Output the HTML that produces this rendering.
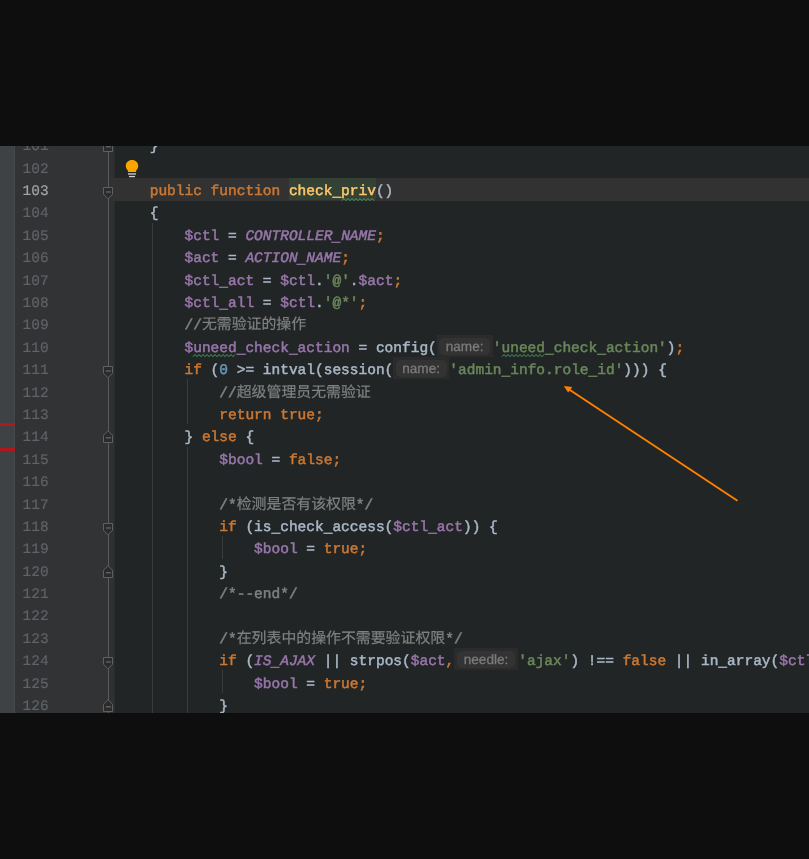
<!DOCTYPE html>
<html><head><meta charset="utf-8"><title>editor</title>
<style>
html,body{margin:0;padding:0;}
body{width:809px;height:859px;background:#0e0e0e;overflow:hidden;position:relative;font-family:"Liberation Mono",monospace;}
#ed{position:absolute;left:0;top:146px;width:809px;height:567px;background:#212526;overflow:hidden;}
#in{will-change:transform;position:absolute;left:0;top:-146px;width:809px;height:859px;}
.abs{position:absolute;}
.ln{text-rendering:geometricPrecision;-webkit-text-stroke:0.5px;position:absolute;left:0;width:1009px;height:22.39px;line-height:22.39px;font-size:14.5px;white-space:pre;color:#a9b7c6;font-family:"Liberation Mono",monospace;letter-spacing:-0.0015px;}
.ln>.code{position:absolute;left:149.7px;top:3.15px;height:22.39px;}
.num{-webkit-text-stroke:0.2px;position:absolute;left:22.6px;top:3.15px;color:#606366;}
.k{color:#cc7832;} .v{color:#9876aa;} .t{color:#a9b7c6;} .s{color:#6a8759;} .n{color:#6897bb;}
.c{color:#808080;} .ci{color:#9876aa;font-style:italic;} .f{color:#ffc66d;}
.ln i{font-style:inherit;position:relative;top:1.2px;}
.cj{font-family:"Liberation Mono","Noto Sans CJK SC",monospace;font-size:14.9px;color:#808080;-webkit-text-stroke:0.2px;letter-spacing:0;}
.hint{display:inline-block;position:relative;height:22.39px;vertical-align:top;background:#2b2b2b;letter-spacing:0;top:-3.15px;}
.hin{position:absolute;left:2.4px;right:2.8px;top:3px;height:17px;border-radius:5px;background:#333333;color:#7b7b7b;font-family:"Liberation Sans",sans-serif;font-size:13.6px;line-height:17px;text-align:center;font-style:normal;-webkit-text-stroke:0.3px;}
.fnbg{background:#334234;display:inline-block;height:22.39px;position:relative;top:-3.15px;vertical-align:top;}
.fnbg>span{position:relative;top:3.15px;}
.wv{}
</style></head><body>
<div id="ed"><div id="in">

<div class="abs" style="left:0;top:146px;width:15px;height:567px;background:#3e4244"></div>
<div class="abs" style="left:15px;top:146px;width:99px;height:567px;background:#313335"></div>
<div class="abs" style="left:14px;top:146px;width:1px;height:567px;background:#44484a"></div>
<div class="abs" style="left:109px;top:146px;width:5px;height:567px;background:#2f3031"></div>
<div class="abs" style="left:114px;top:146px;width:1px;height:567px;background:#2a2c2d"></div>
<div class="abs" style="left:109px;top:177.90px;width:809px;height:22.990000000000002px;background:#323232"></div>
<div class="abs" style="left:0;top:423px;width:15px;height:3px;background:#b0181e"></div>
<div class="abs" style="left:0;top:448px;width:15px;height:3px;background:#b0181e"></div>
<div class="abs" style="left:107.8px;top:146px;width:1px;height:567px;background:#5a5a5a"></div>
<div class="abs" style="left:152px;top:222.68px;width:1px;height:514.97px;background:#393c3d"></div>
<div class="abs" style="left:187px;top:379.41px;width:1px;height:44.78px;background:#393c3d"></div>
<div class="abs" style="left:187px;top:446.58px;width:1px;height:291.07px;background:#393c3d"></div>
<div class="abs" style="left:222px;top:536.14px;width:1px;height:22.39px;background:#393c3d"></div>
<div class="abs" style="left:222px;top:670.48px;width:1px;height:22.39px;background:#393c3d"></div>
<svg class="abs" style="left:102px;top:139.32px" width="12" height="13" viewBox="0 0 12 13"><path d="M1.5 12.5 H10.5 V5.3 L6 0.7 L1.5 5.3 Z" fill="#2b2b2b" stroke="#606060" stroke-width="1"/><path d="M3.9 7.8 H8.9" stroke="#707070" stroke-width="1.1"/></svg>
<svg class="abs" style="left:102px;top:187.10px" width="12" height="13" viewBox="0 0 12 13"><path d="M1.5 0.5 H10.5 V7.2 L6 11.8 L1.5 7.2 Z" fill="#2b2b2b" stroke="#606060" stroke-width="1"/><path d="M3.9 5 H8.9" stroke="#707070" stroke-width="1.1"/></svg>
<svg class="abs" style="left:102px;top:366.22px" width="12" height="13" viewBox="0 0 12 13"><path d="M1.5 0.5 H10.5 V7.2 L6 11.8 L1.5 7.2 Z" fill="#2b2b2b" stroke="#606060" stroke-width="1"/><path d="M3.9 5 H8.9" stroke="#707070" stroke-width="1.1"/></svg>
<svg class="abs" style="left:102px;top:522.95px" width="12" height="13" viewBox="0 0 12 13"><path d="M1.5 0.5 H10.5 V7.2 L6 11.8 L1.5 7.2 Z" fill="#2b2b2b" stroke="#606060" stroke-width="1"/><path d="M3.9 5 H8.9" stroke="#707070" stroke-width="1.1"/></svg>
<svg class="abs" style="left:102px;top:657.29px" width="12" height="13" viewBox="0 0 12 13"><path d="M1.5 0.5 H10.5 V7.2 L6 11.8 L1.5 7.2 Z" fill="#2b2b2b" stroke="#606060" stroke-width="1"/><path d="M3.9 5 H8.9" stroke="#707070" stroke-width="1.1"/></svg>
<svg class="abs" style="left:102px;top:430.39px" width="12" height="13" viewBox="0 0 12 13"><path d="M1.5 12.5 H10.5 V5.3 L6 0.7 L1.5 5.3 Z" fill="#2b2b2b" stroke="#606060" stroke-width="1"/><path d="M3.9 7.8 H8.9" stroke="#707070" stroke-width="1.1"/></svg>
<svg class="abs" style="left:102px;top:564.73px" width="12" height="13" viewBox="0 0 12 13"><path d="M1.5 12.5 H10.5 V5.3 L6 0.7 L1.5 5.3 Z" fill="#2b2b2b" stroke="#606060" stroke-width="1"/><path d="M3.9 7.8 H8.9" stroke="#707070" stroke-width="1.1"/></svg>
<svg class="abs" style="left:102px;top:699.07px" width="12" height="13" viewBox="0 0 12 13"><path d="M1.5 12.5 H10.5 V5.3 L6 0.7 L1.5 5.3 Z" fill="#2b2b2b" stroke="#606060" stroke-width="1"/><path d="M3.9 7.8 H8.9" stroke="#707070" stroke-width="1.1"/></svg>
<svg class="abs" style="left:124px;top:158px" width="16" height="20" viewBox="0 0 16 20"><path d="M8 2.1 C4.5 2.1 1.8 4.6 1.8 7.9 C1.8 9.9 2.9 11.4 3.9 12.6 V13.9 H12.1 V12.6 C13.1 11.4 14.2 9.9 14.2 7.9 C14.2 4.6 11.5 2.1 8 2.1 Z" fill="#fba400"/><rect x="4" y="15" width="8" height="1.9" fill="#9a9ea0"/><rect x="5" y="17.9" width="6" height="1.3" fill="#cfd2d3"/></svg>
<div class="ln" style="top:133.12px"><span class="num">101</span><span class="code"><span class="t">}</span></span></div>
<div class="ln" style="top:155.51px"><span class="num">102</span><span class="code"></span></div>
<div class="ln" style="top:177.90px"><span class="num" style="color:#a4a3a3">103</span><span class="code"><span class="k">public function </span><span class="fnbg"><span class="f">check<i>_</i></span><span class="wv f">priv</span></span><span class="t">()</span></span></div>
<div class="ln" style="top:200.29px"><span class="num">104</span><span class="code"><span class="t">{</span></span></div>
<div class="ln" style="top:222.68px"><span class="num">105</span><span class="code">    <span class="v">$ctl</span><span class="t"> = </span><span class="ci">CONTROLLER<i>_</i>NAME</span><span class="k">;</span></span></div>
<div class="ln" style="top:245.07px"><span class="num">106</span><span class="code">    <span class="v">$act</span><span class="t"> = </span><span class="ci">ACTION<i>_</i>NAME</span><span class="k">;</span></span></div>
<div class="ln" style="top:267.46px"><span class="num">107</span><span class="code">    <span class="v">$ctl<i>_</i>act</span><span class="t"> = </span><span class="v">$ctl</span><span class="t">.</span><span class="s">'@'</span><span class="t">.</span><span class="v">$act</span><span class="k">;</span></span></div>
<div class="ln" style="top:289.85px"><span class="num">108</span><span class="code">    <span class="v">$ctl<i>_</i>all</span><span class="t"> = </span><span class="v">$ctl</span><span class="t">.</span><span class="s">'@*'</span><span class="k">;</span></span></div>
<div class="ln" style="top:312.24px"><span class="num">109</span><span class="code">    <span class="c">//<span class="cj">无需验证的操作</span></span></span></div>
<div class="ln" style="top:334.63px"><span class="num">110</span><span class="code">    <span class="v">$</span><span class="wv v">uneed</span><span class="v"><i>_</i>check<i>_</i>action</span><span class="t"> = config(</span><span class="hint" style="width:56px"><span class="hin">name:</span></span><span class="s">'</span><span class="wv s">uneed</span><span class="s"><i>_</i>check<i>_</i>action'</span><span class="t">)</span><span class="k">;</span></span></div>
<div class="ln" style="top:357.02px"><span class="num">111</span><span class="code">    <span class="k">if </span><span class="t">(</span><span class="n">0</span><span class="t"> &gt;= intval(session(</span><span class="hint" style="width:56px"><span class="hin">name:</span></span><span class="s">'admin<i>_</i>info.role<i>_</i>id'</span><span class="t">))) {</span></span></div>
<div class="ln" style="top:379.41px"><span class="num">112</span><span class="code">        <span class="c">//<span class="cj">超级管理员无需验证</span></span></span></div>
<div class="ln" style="top:401.80px"><span class="num">113</span><span class="code">        <span class="k">return true;</span></span></div>
<div class="ln" style="top:424.19px"><span class="num">114</span><span class="code">    <span class="t">} </span><span class="k">else </span><span class="t">{</span></span></div>
<div class="ln" style="top:446.58px"><span class="num">115</span><span class="code">        <span class="v">$bool</span><span class="t"> = </span><span class="k">false;</span></span></div>
<div class="ln" style="top:468.97px"><span class="num">116</span><span class="code"></span></div>
<div class="ln" style="top:491.36px"><span class="num">117</span><span class="code">        <span class="c">/*<span class="cj">检测是否有该权限</span>*/</span></span></div>
<div class="ln" style="top:513.75px"><span class="num">118</span><span class="code">        <span class="k">if </span><span class="t">(is<i>_</i>check<i>_</i>access(</span><span class="v">$ctl<i>_</i>act</span><span class="t">)) {</span></span></div>
<div class="ln" style="top:536.14px"><span class="num">119</span><span class="code">            <span class="v">$bool</span><span class="t"> = </span><span class="k">true;</span></span></div>
<div class="ln" style="top:558.53px"><span class="num">120</span><span class="code">        <span class="t">}</span></span></div>
<div class="ln" style="top:580.92px"><span class="num">121</span><span class="code">        <span class="c">/*--end*/</span></span></div>
<div class="ln" style="top:603.31px"><span class="num">122</span><span class="code"></span></div>
<div class="ln" style="top:625.70px"><span class="num">123</span><span class="code">        <span class="c">/*<span class="cj">在列表中的操作不需要验证权限</span>*/</span></span></div>
<div class="ln" style="top:648.09px"><span class="num">124</span><span class="code">        <span class="k">if </span><span class="t">(</span><span class="ci">IS<i>_</i>AJAX</span><span class="t"> || strpos(</span><span class="v">$act</span><span class="k">,</span><span class="hint" style="width:64px"><span class="hin">needle:</span></span><span class="s">'ajax'</span><span class="t">) !== </span><span class="k">false</span><span class="t"> || in<i>_</i>array(</span><span class="v">$ctl<i>_</i>act</span><span class="t">, $x)</span></span></div>
<div class="ln" style="top:670.48px"><span class="num">125</span><span class="code">            <span class="v">$bool</span><span class="t"> = </span><span class="k">true;</span></span></div>
<div class="ln" style="top:692.87px"><span class="num">126</span><span class="code">        <span class="t">}</span></span></div>
<svg class="abs" style="left:342.1px;top:197.60px;overflow:visible" width="33.8" height="3.2"><path d="M0.0 2.7 L2.0 0.5 L4.0 2.7 L6.0 0.5 L8.0 2.7 L10.0 0.5 L12.0 2.7 L14.0 0.5 L16.0 2.7 L18.0 0.5 L20.0 2.7 L22.0 0.5 L24.0 2.7 L26.0 0.5 L28.0 2.7 L30.0 0.5 L32.0 2.7" fill="none" stroke="#4a9d5f" stroke-width="1"/></svg>
<svg class="abs" style="left:193.2px;top:354.33px;overflow:visible" width="43.5" height="3.2"><path d="M0.0 2.7 L2.0 0.5 L4.0 2.7 L6.0 0.5 L8.0 2.7 L10.0 0.5 L12.0 2.7 L14.0 0.5 L16.0 2.7 L18.0 0.5 L20.0 2.7 L22.0 0.5 L24.0 2.7 L26.0 0.5 L28.0 2.7 L30.0 0.5 L32.0 2.7 L34.0 0.5 L36.0 2.7 L38.0 0.5 L40.0 2.7 L42.0 0.5" fill="none" stroke="#4a9d5f" stroke-width="1"/></svg>
<svg class="abs" style="left:501.5px;top:354.33px;overflow:visible" width="43.5" height="3.2"><path d="M0.0 2.7 L2.0 0.5 L4.0 2.7 L6.0 0.5 L8.0 2.7 L10.0 0.5 L12.0 2.7 L14.0 0.5 L16.0 2.7 L18.0 0.5 L20.0 2.7 L22.0 0.5 L24.0 2.7 L26.0 0.5 L28.0 2.7 L30.0 0.5 L32.0 2.7 L34.0 0.5 L36.0 2.7 L38.0 0.5 L40.0 2.7 L42.0 0.5" fill="none" stroke="#4a9d5f" stroke-width="1"/></svg>
<svg class="abs" style="left:0;top:0" width="809" height="859" viewBox="0 0 809 859"><path d="M737.5 500.7 L566.5 387.7" stroke="#ff8000" stroke-width="1.9" fill="none"/><path d="M563.8 385.9 L572.3 386.9 L568.1 392.4 Z" fill="#ff8000"/></svg>
</div></div></body></html>
